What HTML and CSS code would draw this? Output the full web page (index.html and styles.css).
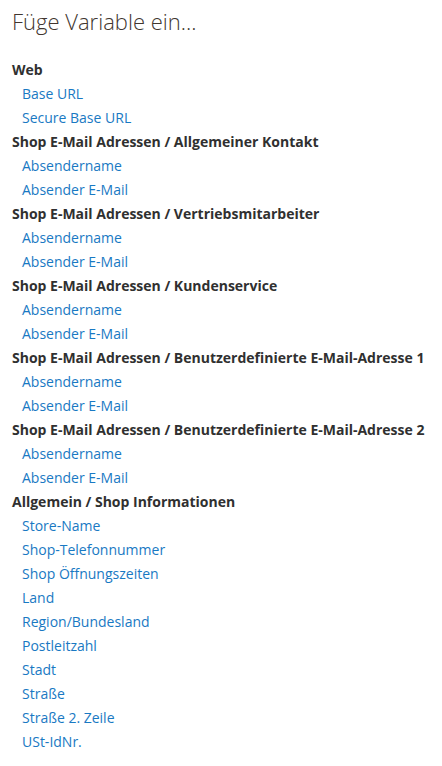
FILE: index.html
```html
<!DOCTYPE html>
<html lang="de">
<head>
    <meta charset="UTF-8">
    <meta name="viewport" content="width=device-width, initial-scale=1.0">
    <title>Füge Variable ein...</title>
    <link rel="stylesheet" href="styles.css">
</head>
<body>
    <div class="modal-content">
        <h1 class="modal-title">Füge Variable ein...</h1>

        <div class="variables">
            <div class="group">
                <div class="group-label">Web</div>
                <a class="var-link" href="#">Base URL</a>
                <a class="var-link" href="#">Secure Base URL</a>
            </div>
            <div class="group">
                <div class="group-label">Shop E-Mail Adressen / Allgemeiner Kontakt</div>
                <a class="var-link" href="#">Absendername</a>
                <a class="var-link" href="#">Absender E-Mail</a>
            </div>
            <div class="group">
                <div class="group-label">Shop E-Mail Adressen / Vertriebsmitarbeiter</div>
                <a class="var-link" href="#">Absendername</a>
                <a class="var-link" href="#">Absender E-Mail</a>
            </div>
            <div class="group">
                <div class="group-label">Shop E-Mail Adressen / Kundenservice</div>
                <a class="var-link" href="#">Absendername</a>
                <a class="var-link" href="#">Absender E-Mail</a>
            </div>
            <div class="group">
                <div class="group-label">Shop E-Mail Adressen / Benutzerdefinierte E-Mail-Adresse 1</div>
                <a class="var-link" href="#">Absendername</a>
                <a class="var-link" href="#">Absender E-Mail</a>
            </div>
            <div class="group">
                <div class="group-label">Shop E-Mail Adressen / Benutzerdefinierte E-Mail-Adresse 2</div>
                <a class="var-link" href="#">Absendername</a>
                <a class="var-link" href="#">Absender E-Mail</a>
            </div>
            <div class="group">
                <div class="group-label">Allgemein / Shop Informationen</div>
                <a class="var-link" href="#">Store-Name</a>
                <a class="var-link" href="#">Shop-Telefonnummer</a>
                <a class="var-link" href="#">Shop Öffnungszeiten</a>
                <a class="var-link" href="#">Land</a>
                <a class="var-link" href="#">Region/Bundesland</a>
                <a class="var-link" href="#">Postleitzahl</a>
                <a class="var-link" href="#">Stadt</a>
                <a class="var-link" href="#">Straße</a>
                <a class="var-link" href="#">Straße 2. Zeile</a>
                <a class="var-link" href="#">USt-IdNr.</a>
            </div>
        </div>
    </div>
</body>
</html>
```
FILE: styles.css
```css
* {
    margin: 0;
    padding: 0;
    box-sizing: border-box;
    font-family: 'Open Sans', 'Noto Sans', sans-serif;
}

body {
    background-color: #fff;
    color: #303030;
}

.modal-content {
    padding: 0 12px;
}

.modal-title {
    font-size: 22px;
    font-weight: 300;
    line-height: 30px;
    padding-top: 6px;
    margin-bottom: 22px;
    color: #41362f;
}

.variables {
    display: flex;
    flex-direction: column;
}

.group {
    display: flex;
    flex-direction: column;
}

.group-label {
    font-size: 14px;
    font-weight: 700;
    line-height: 24px;
    color: #303030;
}

.var-link {
    font-size: 14px;
    line-height: 24px;
    padding-left: 10px;
    color: #1979c3;
    text-decoration: none;
}
```
